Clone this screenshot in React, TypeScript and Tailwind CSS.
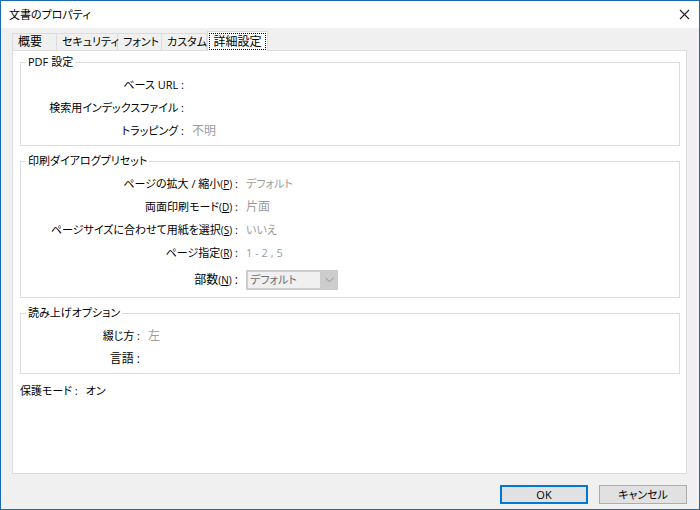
import { useState } from "react";

type Row = {
  label: string;
  accessKey?: string;
  value?: string;
};

const TABS = [
  { name: "概要", width: "w-[45px] border-l" },
  { name: "セキュリティ", width: "w-[61px]" },
  { name: "フォント", width: "w-[44px]" },
  { name: "カスタム", width: "w-[45px]" },
  { name: "詳細設定", width: "w-[61px]" },
];

const PDF_ROWS: Row[] = [
  { label: "ベース URL" },
  { label: "検索用インデックスファイル" },
  { label: "トラッピング", value: "不明" },
];

const PRINT_ROWS: Row[] = [
  { label: "ページの拡大 / 縮小", accessKey: "P", value: "デフォルト" },
  { label: "両面印刷モード", accessKey: "D", value: "片面" },
  { label: "ページサイズに合わせて用紙を選択", accessKey: "S", value: "いいえ" },
  { label: "ページ指定", accessKey: "R", value: "1 - 2 , 5" },
];

const READING_ROWS: Row[] = [
  { label: "綴じ方", value: "左" },
  { label: "言語" },
];

// Kanji-only text is set a step larger than text with kana or Latin in it
function textSize(text = "") {
  return /[ぁ-んァ-ヶ0-9A-Za-z]/.test(text) ? "text-[11px]" : "text-[12px]";
}

function LabelText({ label, accessKey }: Row) {
  return (
    <span className={textSize(label)}>
      {label}
      {accessKey && (
        <span className="text-[10px]">
          (<u>{accessKey}</u>)
        </span>
      )}
      {" :"}
    </span>
  );
}

function PropertyRow({ row, labelWidth }: { row: Row; labelWidth: string }) {
  return (
    <div className="flex h-[23px] items-center gap-2">
      <dt className={`${labelWidth} shrink-0 text-right`}>
        <LabelText {...row} />
      </dt>
      <dd className={`${textSize(row.value)} text-[#9c9c9c]`}>{row.value}</dd>
    </div>
  );
}

function Group({ title, children }: { title: string; children: React.ReactNode }) {
  return (
    <fieldset className="border border-[#dcdcdc] py-[3px]">
      <legend className="ml-[5px] px-[2px] leading-4">{title}</legend>
      {children}
    </fieldset>
  );
}

export default function App() {
  const [active, setActive] = useState("詳細設定");

  return (
    <div className="flex min-h-screen flex-col border border-[#1a6bb0] bg-[#f0f0f0] font-['Open_Sans','Noto_Sans_CJK_JP',sans-serif] text-[11px] leading-4 text-black [font-feature-settings:'palt']">
      <header className="flex h-[27px] items-center justify-between bg-white px-2">
        <h1>文書のプロパティ</h1>
        <button type="button" aria-label="閉じる" className="p-px">
          <svg width="11" height="11" viewBox="0 0 11 11" fill="none" stroke="#222" strokeWidth="1.1">
            <path d="M1 1l9 9M10 1l-9 9" />
          </svg>
        </button>
      </header>

      <main className="flex flex-1 flex-col pt-[3px] pr-3 pb-[5px] pl-[11px]">
        <div role="tablist" className="flex items-end">
          {TABS.map((tab) => {
            const selected = tab.name === active;
            return (
              <button
                key={tab.name}
                type="button"
                role="tab"
                aria-selected={selected}
                onClick={() => setActive(tab.name)}
                className={`${tab.width} ${textSize(tab.name)} shrink-0 border-t border-r border-[#dcdcdc] text-left leading-4 whitespace-nowrap ${
                  selected ? "relative -mb-px h-[20px] border-l bg-white p-px" : "h-[17px] pl-[5px]"
                }`}
              >
                {selected ? (
                  <span className="flex h-full items-center justify-center border border-dotted border-black">
                    {tab.name}
                  </span>
                ) : (
                  tab.name
                )}
              </button>
            );
          })}
        </div>

        <section
          role="tabpanel"
          className="flex flex-1 flex-col gap-[7px] border border-[#dcdcdc] bg-white pt-[3px] pr-[6px] pl-[7px]"
        >
          <Group title="PDF 設定">
            <dl>
              {PDF_ROWS.map((row) => (
                <PropertyRow key={row.label} row={row} labelWidth="w-[163px]" />
              ))}
            </dl>
          </Group>

          <Group title="印刷ダイアログプリセット">
            <dl>
              {PRINT_ROWS.map((row) => (
                <PropertyRow key={row.label} row={row} labelWidth="w-[217px]" />
              ))}
            </dl>
            <div className="flex h-[30px] items-center gap-2 pt-[2px]">
              <label htmlFor="copies" className="w-[217px] shrink-0 text-right">
                <LabelText label="部数" accessKey="N" />
              </label>
              <div className="relative">
                <select
                  id="copies"
                  disabled
                  className="block h-[20px] w-[92px] appearance-none border-2 border-r-[18px] border-[#cccccc] bg-[#f0f0f0] pl-[2px] leading-4 text-[#6d6d6d] opacity-100"
                >
                  <option>デフォルト</option>
                </select>
                <svg
                  className="pointer-events-none absolute top-[7px] right-[4px]"
                  width="9"
                  height="6"
                  viewBox="0 0 9 6"
                  fill="none"
                  stroke="#8f8f8f"
                >
                  <path d="M0.5 0.8l4 4 4-4" />
                </svg>
              </div>
            </div>
          </Group>

          <Group title="読み上げオプション">
            <dl>
              {READING_ROWS.map((row) => (
                <PropertyRow key={row.label} row={row} labelWidth="w-[119px]" />
              ))}
            </dl>
          </Group>

          <dl className="flex gap-2 pt-[2px]">
            <dt>保護モード :</dt>
            <dd>オン</dd>
          </dl>
        </section>

        <footer className="flex justify-end gap-[11px] pt-[11px]">
          <button type="button" className="h-[19px] w-[88px] border-2 border-[#0078d7] bg-[#e1e1e1] leading-[15px]">
            OK
          </button>
          <button type="button" className="h-[19px] w-[88px] border border-[#adadad] bg-[#e1e1e1] leading-4">
            キャンセル
          </button>
        </footer>
      </main>
    </div>
  );
}
